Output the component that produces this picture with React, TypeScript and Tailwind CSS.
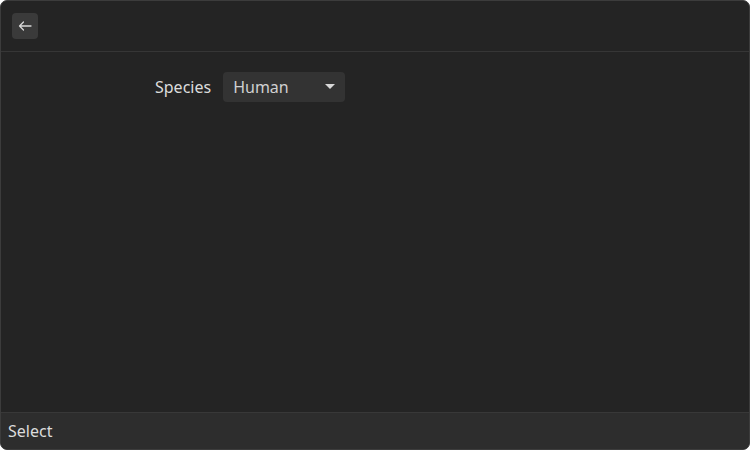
import React from "react";

export default function App() {
  return (
    <div className="w-[750px] h-[450px] bg-white" style={{ fontFamily: '"Noto Sans", sans-serif' }}>
      <div className="w-full h-full flex flex-col rounded-[7px] overflow-hidden border border-[#3c3c3c] bg-[#242424]">
        <div className="h-[51px] shrink-0 flex items-center px-[11px] border-b border-[#363636]">
          <button className="w-[26px] h-[26px] rounded-[4px] bg-[#3a3a3a] flex items-center justify-center">
            <svg width="16" height="16" viewBox="0 0 16 16" fill="none" stroke="#d8d8d8" strokeWidth="1.3" strokeLinecap="round" strokeLinejoin="round">
              <path d="M14 8H2.5M6.5 4L2.5 8l4 4" />
            </svg>
          </button>
        </div>
        <div className="flex-1 flex items-start pt-[20px] pl-[154px]">
          <div className="flex items-center gap-[12px]">
            <span className="text-[16px] text-[#dcdcdc]">Species</span>
            <div className="w-[122px] h-[30px] rounded-[4px] bg-[#333333] flex items-center justify-between pl-[10px] pr-[10px]">
              <span className="text-[16px] text-[#d0d0d0]">Human</span>
              <svg width="10" height="6" viewBox="0 0 10 6"><path d="M0 0h10L5 5z" fill="#d8d8d8" /></svg>
            </div>
          </div>
        </div>
        <div className="h-[37px] shrink-0 flex items-center px-[7px] bg-[#2d2d2d] border-t border-[#383838]">
          <span className="text-[16px] text-[#dcdcdc]">Select</span>
        </div>
      </div>
    </div>
  );
}
